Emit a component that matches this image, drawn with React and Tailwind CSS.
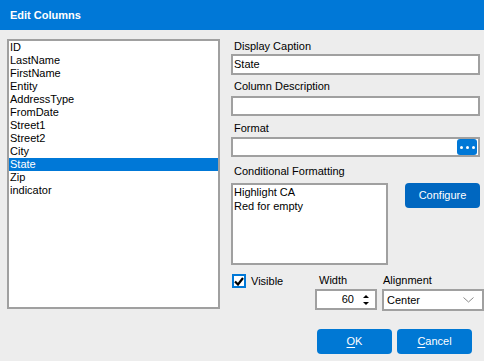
const COLUMNS = [
  "ID",
  "LastName",
  "FirstName",
  "Entity",
  "AddressType",
  "FromDate",
  "Street1",
  "Street2",
  "City",
  "State",
  "Zip",
  "indicator",
];

const RULES = ["Highlight CA", "Red for empty"];

function Label({ className = "", children }) {
  return <div className={`flex items-center pl-[3px] text-black ${className}`}>{children}</div>;
}

function TextBox({ className = "", children }) {
  return (
    <div className={`flex items-center border-2 border-[#a0a0a0] bg-white pl-[1px] ${className}`}>
      {children}
    </div>
  );
}

export default function App() {
  const selected = "State";

  return (
    <div
      className="h-[361px] w-[484px] overflow-hidden bg-[#ededed] text-[11px] text-black"
      style={{ fontFamily: '"Liberation Sans", Arial, sans-serif' }}
    >
      <div className="flex h-[30px] items-center bg-[#0078d7] pl-[10px] font-bold text-white">
        Edit Columns
      </div>

      <div className="flex pt-[9px]">
        {/* column list */}
        <div className="ml-[7px] h-[270px] w-[213px] shrink-0 border-2 border-[#a0a0a0] bg-white">
          {COLUMNS.map((c) => (
            <div
              key={c}
              className={`h-[13px] pl-[1px] leading-[13px] ${
                c === selected ? "bg-[#0078d7] text-white" : ""
              }`}
            >
              {c}
            </div>
          ))}
        </div>

        {/* properties */}
        <div className="ml-[11px] w-[249px] shrink-0">
          <Label className="h-[15px]">Display Caption</Label>
          <TextBox className="h-[21px]">State</TextBox>

          <Label className="h-[21px] pt-[2px]">Column Description</Label>
          <TextBox className="h-[20px]" />

          <Label className="h-[21px] pt-[3px]">Format</Label>
          <TextBox className="h-[20px] justify-between pr-[1px]">
            <span />
            <button className="flex h-[16px] w-[20px] items-center justify-center gap-[3px] rounded-[3px] bg-[#0078d7]">
              <span className="h-[3px] w-[3px] rounded-full bg-white" />
              <span className="h-[3px] w-[3px] rounded-full bg-white" />
              <span className="h-[3px] w-[3px] rounded-full bg-white" />
            </button>
          </TextBox>

          <Label className="h-[26px] pt-[2px]">Conditional Formatting</Label>
          <div className="flex items-start">
            <div className="h-[82px] w-[157px] shrink-0 border-2 border-[#a0a0a0] bg-white">
              {RULES.map((r) => (
                <div key={r} className="h-[14px] pl-[1px] leading-[14px]">
                  {r}
                </div>
              ))}
            </div>
            <button className="ml-[17px] h-[25px] w-[75px] rounded-[4px] bg-[#0067c0] text-white">
              Configure
            </button>
          </div>

          <div className="flex">
            <div className="flex w-[84px] shrink-0 items-center gap-[5px] self-start pl-[1px] pt-[8px]">
              <div className="flex h-[14px] w-[14px] items-center justify-center border-2 border-[#0078d7] bg-white">
                <svg width="10" height="9" viewBox="0 0 10 9">
                  <path d="M1 4.5 L4 7.5 L9 1" fill="none" stroke="#000" strokeWidth="2.2" />
                </svg>
              </div>
              <span>Visible</span>
            </div>

            <div className="w-[62px] shrink-0">
              <div className="flex h-[24px] items-center pl-[4px] pt-[6px]">Width</div>
              <div className="flex h-[21px] items-center justify-end border-2 border-[#a0a0a0] bg-white pr-[6px]">
                <span className="mr-[9px]">60</span>
                <svg width="6" height="12" viewBox="0 0 6 12">
                  <path d="M0 4 L3 1 L6 4 Z" fill="#000" />
                  <path d="M0 8 L3 11 L6 8 Z" fill="#000" />
                </svg>
              </div>
            </div>

            <div className="ml-[5px] w-[102px] shrink-0">
              <div className="flex h-[24px] items-center pl-[1px] pt-[6px]">Alignment</div>
              <div className="flex h-[22px] items-center justify-between border-2 border-[#a0a0a0] bg-white pl-[3px] pr-[8px]">
                <span>Center</span>
                <svg width="11" height="6" viewBox="0 0 11 6">
                  <path d="M0.5 0.5 L5.5 5 L10.5 0.5" fill="none" stroke="#8a8a8a" strokeWidth="1" />
                </svg>
              </div>
            </div>
          </div>

          <div className="mt-[18px] flex justify-end gap-[5px] pr-[8px]">
            <button className="h-[25px] w-[75px] rounded-[4px] bg-[#0078d4] text-white">
              <span className="underline underline-offset-2">O</span>K
            </button>
            <button className="h-[25px] w-[75px] rounded-[4px] bg-[#0078d4] text-white">
              <span className="underline underline-offset-2">C</span>ancel
            </button>
          </div>
        </div>
      </div>
    </div>
  );
}
